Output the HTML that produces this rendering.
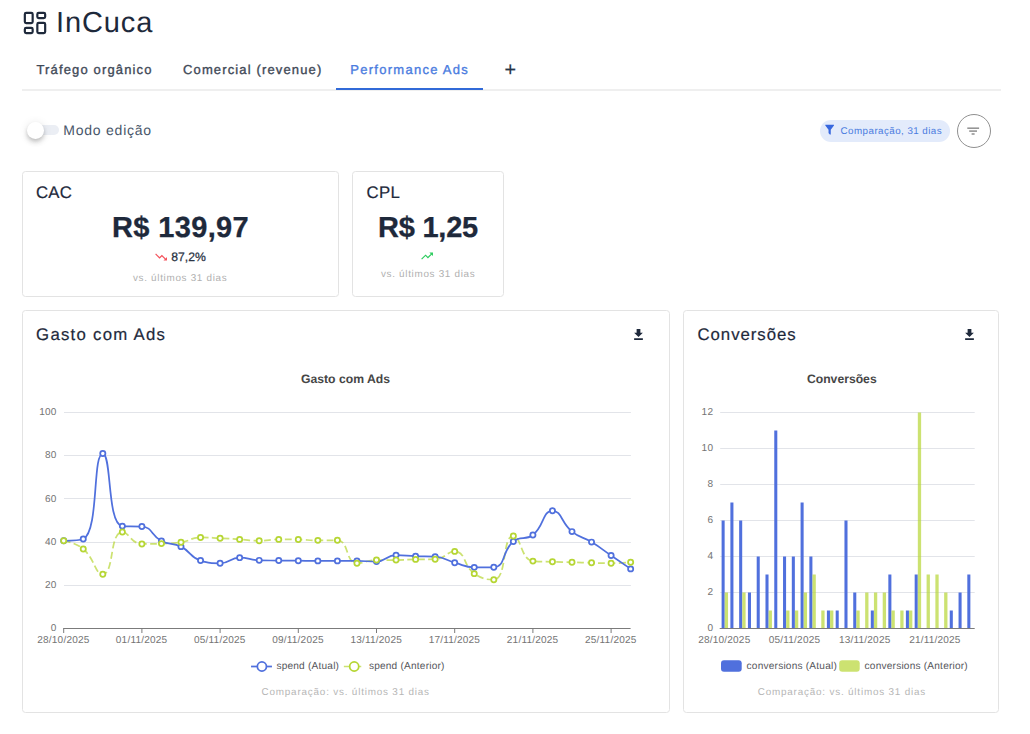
<!DOCTYPE html>
<html lang="pt-BR">
<head>
<meta charset="utf-8">
<title>InCuca</title>
<style>
*{box-sizing:border-box;margin:0;padding:0}
html,body{width:1030px;height:734px;background:#fff;overflow:hidden}
body{position:relative;font-family:"Liberation Sans",Arial,sans-serif;color:#1e293b;text-rendering:geometricPrecision}
.abs{position:absolute;white-space:nowrap}
.card{position:absolute;border:1px solid #e3e3e3;border-radius:3.5px;background:#fff}
.chart{position:absolute;left:0;top:0}
.tab{position:absolute;top:62.3px;font-size:13px;-webkit-text-stroke:.35px currentColor;color:#3f4957;letter-spacing:1.14px;line-height:16px;white-space:nowrap}
.ttl{position:absolute;font-size:16.8px;letter-spacing:.25px;-webkit-text-stroke:.2px currentColor;line-height:20px;color:#1e293b;white-space:nowrap}
.big{position:absolute;font-size:29px;-webkit-text-stroke:.3px currentColor;font-weight:bold;line-height:34px;color:#1e293b;white-space:nowrap;text-align:center}
.sub{position:absolute;font-size:9.9px;line-height:12px;color:#b0b0b0;white-space:nowrap;letter-spacing:.7px}
.foot{position:absolute;font-size:9.9px;line-height:13px;color:#b6b6b6;white-space:nowrap;letter-spacing:.81px}
</style>
</head>
<body>
<!-- header -->
<svg class="abs" style="left:20.1px;top:7.9px" width="30" height="30" viewBox="0 0 24 24" fill="none" stroke="#1e293b" stroke-width="1.75" stroke-linejoin="round">
<rect x="3.87" y="3.87" width="6.26" height="8.26" rx="1.1"/><rect x="3.87" y="15.87" width="6.26" height="4.26" rx="1.1"/><rect x="13.87" y="11.87" width="6.26" height="8.26" rx="1.1"/><rect x="13.87" y="3.87" width="6.26" height="4.26" rx="1.1"/>
</svg>
<div class="abs" id="brand" style="left:56px;top:5.8px;font-size:29px;line-height:34px;color:#1e293b;letter-spacing:.9px">InCuca</div>

<!-- tabs -->
<div class="abs" style="left:22px;top:89px;width:978.6px;height:2px;background:#efefef"></div>
<div class="tab" id="tab1" style="left:36.5px">Tráfego orgânico</div>
<div class="tab" id="tab2" style="left:183px">Comercial (revenue)</div>
<div class="tab" id="tab3" style="left:350.3px;color:#4a7ce0;letter-spacing:1.27px">Performance Ads</div>
<div class="abs" style="left:336px;top:88px;width:147px;height:2px;background:#316ad8"></div>
<div class="abs" id="plus" style="left:504.6px;top:59px;font-size:19.8px;line-height:22px;color:#283548;-webkit-text-stroke:.2px currentColor">+</div>

<!-- toggle -->
<div class="abs" style="left:30px;top:125px;width:28.5px;height:10.2px;border-radius:6px;background:#ebeef4"></div>
<div class="abs" style="left:27px;top:122.2px;width:16.6px;height:16.6px;border-radius:50%;background:#fff;box-shadow:0 2px 4px -1px rgba(0,0,0,.17),0 4px 5px 0 rgba(0,0,0,.11),0 1px 10px 0 rgba(0,0,0,.1)"></div>
<div class="abs" id="modo" style="left:63.2px;top:120.5px;font-size:14px;line-height:18px;color:#475569;letter-spacing:.78px">Modo edição</div>

<!-- chip -->
<div class="abs" style="left:819.7px;top:120px;width:130.5px;height:21.6px;border-radius:11px;background:#e3ebfb"></div>
<svg class="abs" style="left:823.2px;top:122.85px" width="13.3" height="13.3" viewBox="0 0 24 24"><path fill="#3767de" d="M14,12V19.88C14.04,20.18 13.94,20.5 13.71,20.71C13.32,21.1 12.69,21.1 12.3,20.71L10.29,18.7C10.06,18.47 9.96,18.16 10,17.87V12H9.97L4.21,4.62C3.87,4.19 3.95,3.56 4.38,3.22C4.57,3.08 4.78,3 5,3V3H19V3C19.22,3 19.43,3.08 19.62,3.22C20.05,3.56 20.13,4.19 19.79,4.62L14.03,12H14Z"/></svg>
<div class="abs" id="chip" style="left:840.6px;top:125px;font-size:9.8px;line-height:13px;color:#4a7be0;letter-spacing:.44px">Comparação, 31 dias</div>
<!-- filter button -->
<div class="abs" style="left:957px;top:113.6px;width:34px;height:34px;border-radius:50%;border:1.2px solid #909090"></div>
<svg class="abs" style="left:964px;top:120.6px" width="20" height="20" viewBox="0 0 20 20"><g stroke="#959595" stroke-width="1.6"><line x1="3.3" x2="15.1" y1="7.2" y2="7.2"/><line x1="5.2" x2="13" y1="10.1" y2="10.1"/><line x1="7.6" x2="10.6" y1="13" y2="13"/></g></svg>

<!-- KPI cards -->
<div class="card" style="left:22px;top:171px;width:317px;height:125.5px"></div>
<div class="card" style="left:352px;top:171px;width:152px;height:125.5px"></div>
<div class="ttl" id="cac" style="left:36px;top:183px">CAC</div>
<div class="ttl" id="cpl" style="left:366.6px;top:183px">CPL</div>
<div class="big" id="big1" style="left:22px;width:317px;top:211px;letter-spacing:.36px">R$ 139,97</div>
<div class="big" id="big2" style="left:352px;width:152px;top:211px;letter-spacing:-.25px">R$ 1,25</div>
<svg class="abs" style="left:154.2px;top:250.3px" width="14.16" height="14.16" viewBox="0 0 24 24"><path fill="#f4525c" d="M16,18L18.29,15.71L13.41,10.83L9.41,14.83L2,7.41L3.41,6L9.41,12L13.41,8L19.71,14.29L22,12V18H16Z"/></svg>
<div class="abs" id="pct" style="left:171.3px;top:249.6px;font-size:12.2px;line-height:15px;-webkit-text-stroke:.25px currentColor;color:#2b3445;letter-spacing:0px">87,2%</div>
<svg class="abs" style="left:419.5px;top:249.1px" width="14.16" height="14.16" viewBox="0 0 24 24"><path fill="#2ecc5f" d="M16,6L18.29,8.29L13.41,13.17L9.41,9.17L2,16.59L3.41,18L9.41,12L13.41,16L19.71,9.71L22,12V6H16Z"/></svg>
<div class="sub" id="sub1" style="left:132.9px;top:272.6px">vs. últimos 31 dias</div>
<div class="sub" id="sub2" style="left:380.9px;top:269.2px">vs. últimos 31 dias</div>

<!-- chart cards -->
<div class="card" style="left:22px;top:310px;width:648px;height:403px"></div>
<div class="card" style="left:683px;top:310px;width:316px;height:403px"></div>
<div class="ttl" id="t1" style="left:36.1px;top:324.8px;letter-spacing:1.25px">Gasto com Ads</div>
<div class="ttl" id="t2" style="left:697.5px;top:324.8px;letter-spacing:.95px">Conversões</div>
<svg class="abs" style="left:630.6px;top:326.9px" width="15" height="15" viewBox="0 0 24 24"><path fill="#1e293b" d="M5,20.7H19V17.8H5M19,9H15V3H9V9H5L12,16L19,9Z"/></svg>
<svg class="abs" style="left:961.5px;top:326.9px" width="15" height="15" viewBox="0 0 24 24"><path fill="#1e293b" d="M5,20.7H19V17.8H5M19,9H15V3H9V9H5L12,16L19,9Z"/></svg>
<svg class="chart" width="1030" height="734" viewBox="0 0 1030 734" font-family="'Liberation Sans', Arial, sans-serif">
<text x="56.5" y="631.2" font-size="10.05" letter-spacing=".2" fill="#747474" text-anchor="end">0</text>
<line x1="64.0" x2="630.9" y1="585.5" y2="585.5" stroke="#e2e4e9" stroke-width="1"/>
<text x="56.5" y="588.0" font-size="10.05" letter-spacing=".2" fill="#747474" text-anchor="end">20</text>
<line x1="64.0" x2="630.9" y1="542.5" y2="542.5" stroke="#e2e4e9" stroke-width="1"/>
<text x="56.5" y="544.8" font-size="10.05" letter-spacing=".2" fill="#747474" text-anchor="end">40</text>
<line x1="64.0" x2="630.9" y1="498.5" y2="498.5" stroke="#e2e4e9" stroke-width="1"/>
<text x="56.5" y="501.6" font-size="10.05" letter-spacing=".2" fill="#747474" text-anchor="end">60</text>
<line x1="64.0" x2="630.9" y1="455.5" y2="455.5" stroke="#e2e4e9" stroke-width="1"/>
<text x="56.5" y="458.4" font-size="10.05" letter-spacing=".2" fill="#747474" text-anchor="end">80</text>
<line x1="64.0" x2="630.9" y1="412.5" y2="412.5" stroke="#e2e4e9" stroke-width="1"/>
<text x="56.5" y="415.2" font-size="10.05" letter-spacing=".2" fill="#747474" text-anchor="end">100</text>
<line x1="63.2" x2="630.6" y1="628.5" y2="628.5" stroke="#7b7b7b" stroke-width="1"/>
<line x1="63.7" x2="63.7" y1="628.5" y2="633.0" stroke="#7b7b7b" stroke-width="1"/>
<text x="63.4" y="643.2" font-size="10.05" letter-spacing=".2" fill="#747474" text-anchor="middle">28/10/2025</text>
<line x1="141.9" x2="141.9" y1="628.5" y2="633.0" stroke="#7b7b7b" stroke-width="1"/>
<text x="141.6" y="643.2" font-size="10.05" letter-spacing=".2" fill="#747474" text-anchor="middle">01/11/2025</text>
<line x1="220.1" x2="220.1" y1="628.5" y2="633.0" stroke="#7b7b7b" stroke-width="1"/>
<text x="219.8" y="643.2" font-size="10.05" letter-spacing=".2" fill="#747474" text-anchor="middle">05/11/2025</text>
<line x1="298.3" x2="298.3" y1="628.5" y2="633.0" stroke="#7b7b7b" stroke-width="1"/>
<text x="298.0" y="643.2" font-size="10.05" letter-spacing=".2" fill="#747474" text-anchor="middle">09/11/2025</text>
<line x1="376.5" x2="376.5" y1="628.5" y2="633.0" stroke="#7b7b7b" stroke-width="1"/>
<text x="376.2" y="643.2" font-size="10.05" letter-spacing=".2" fill="#747474" text-anchor="middle">13/11/2025</text>
<line x1="454.7" x2="454.7" y1="628.5" y2="633.0" stroke="#7b7b7b" stroke-width="1"/>
<text x="454.4" y="643.2" font-size="10.05" letter-spacing=".2" fill="#747474" text-anchor="middle">17/11/2025</text>
<line x1="532.9" x2="532.9" y1="628.5" y2="633.0" stroke="#7b7b7b" stroke-width="1"/>
<text x="532.6" y="643.2" font-size="10.05" letter-spacing=".2" fill="#747474" text-anchor="middle">21/11/2025</text>
<line x1="611.1" x2="611.1" y1="628.5" y2="633.0" stroke="#7b7b7b" stroke-width="1"/>
<text x="610.8" y="643.2" font-size="10.05" letter-spacing=".2" fill="#747474" text-anchor="middle">25/11/2025</text>
<text x="345.5" y="383.3" font-size="12.2" font-weight="bold" fill="#464646" text-anchor="middle">Gasto com Ads</text>
<path d="M63.70 540.80C63.70 540.80 75.45 542.33 83.25 549.01C95.00 559.07 94.85 574.28 102.80 574.28C114.40 574.28 109.24 531.95 122.35 531.95C128.79 531.95 131.35 543.94 141.90 543.94C150.90 543.94 151.69 543.94 161.45 543.61C171.24 543.29 171.36 543.61 181.00 542.32C190.91 540.98 190.63 537.43 200.55 537.43C210.18 537.43 210.33 537.73 220.10 538.21C229.88 538.70 229.88 538.75 239.65 539.38C249.43 540.01 249.42 540.74 259.20 540.74C268.97 540.74 268.96 539.38 278.75 539.38C288.51 539.38 288.53 539.38 298.30 539.57C308.08 539.77 308.07 540.37 317.85 540.37C327.62 540.37 329.72 540.26 337.40 540.26C349.27 540.26 345.15 563.27 356.95 563.27C364.70 563.27 366.66 560.03 376.50 560.03C386.21 560.03 386.28 560.03 396.05 560.03C405.83 560.03 405.82 559.60 415.60 559.38C425.37 559.16 425.73 559.38 435.15 559.16C445.28 558.93 446.58 551.39 454.70 551.39C466.13 551.39 462.69 565.27 474.25 573.64C482.24 579.42 487.95 579.68 493.80 579.68C507.50 579.68 501.61 535.94 513.35 535.94C521.16 535.94 520.79 560.05 532.90 561.11C540.34 561.76 542.67 561.46 552.45 561.76C562.22 562.05 562.22 562.03 572.00 562.30C581.77 562.57 581.77 562.59 591.55 562.84C601.32 563.08 601.33 563.27 611.10 563.27C620.88 563.27 630.65 562.30 630.65 562.30" fill="none" stroke="#b6d634" stroke-width="1.74" stroke-dasharray="6.96 3.48" stroke-opacity="0.7" stroke-linejoin="round"/>
<path d="M63.70 540.80C63.70 540.80 79.68 540.80 83.25 539.08C99.23 531.35 92.27 453.54 102.80 453.54C111.82 453.54 106.84 524.46 122.35 526.12C126.39 526.55 133.19 526.12 141.90 526.55C152.74 527.09 150.80 535.55 161.45 541.02C170.35 545.59 172.03 542.16 181.00 546.64C191.58 551.92 189.82 557.24 200.55 560.55C209.37 563.27 210.47 563.27 220.10 563.27C230.02 563.27 229.73 557.65 239.65 557.65C249.28 557.65 249.38 560.16 259.20 560.35C268.93 560.55 268.97 560.45 278.75 560.55C288.52 560.64 288.52 560.65 298.30 560.74C308.07 560.83 308.07 560.89 317.85 560.89C327.62 560.89 327.63 560.89 337.40 560.89C347.18 560.89 347.18 560.89 356.95 560.94C366.73 560.98 366.97 561.54 376.50 561.54C386.52 561.54 386.03 555.12 396.05 555.12C405.58 555.12 405.82 555.75 415.60 556.14C425.37 556.53 425.59 556.14 435.15 556.68C445.14 557.24 444.84 559.99 454.70 562.68C464.39 565.33 464.34 567.37 474.25 567.37C483.89 567.37 486.44 567.37 493.80 567.26C505.99 567.09 501.40 551.32 513.35 541.45C520.95 535.17 525.11 541.08 532.90 534.97C544.66 525.75 542.26 510.78 552.45 510.78C561.81 510.78 561.00 522.79 572.00 531.60C580.55 538.45 582.10 536.32 591.55 542.10C601.65 548.27 601.33 548.80 611.10 555.49C620.88 562.19 630.65 568.88 630.65 568.88" fill="none" stroke="#5070dd" stroke-width="1.74" stroke-linejoin="round"/>
<circle cx="63.70" cy="540.80" r="2.6" fill="#fff" stroke="#5070dd" stroke-width="1.74"/>
<circle cx="83.25" cy="539.08" r="2.6" fill="#fff" stroke="#5070dd" stroke-width="1.74"/>
<circle cx="102.80" cy="453.54" r="2.6" fill="#fff" stroke="#5070dd" stroke-width="1.74"/>
<circle cx="122.35" cy="526.12" r="2.6" fill="#fff" stroke="#5070dd" stroke-width="1.74"/>
<circle cx="141.90" cy="526.55" r="2.6" fill="#fff" stroke="#5070dd" stroke-width="1.74"/>
<circle cx="161.45" cy="541.02" r="2.6" fill="#fff" stroke="#5070dd" stroke-width="1.74"/>
<circle cx="181.00" cy="546.64" r="2.6" fill="#fff" stroke="#5070dd" stroke-width="1.74"/>
<circle cx="200.55" cy="560.55" r="2.6" fill="#fff" stroke="#5070dd" stroke-width="1.74"/>
<circle cx="220.10" cy="563.27" r="2.6" fill="#fff" stroke="#5070dd" stroke-width="1.74"/>
<circle cx="239.65" cy="557.65" r="2.6" fill="#fff" stroke="#5070dd" stroke-width="1.74"/>
<circle cx="259.20" cy="560.35" r="2.6" fill="#fff" stroke="#5070dd" stroke-width="1.74"/>
<circle cx="278.75" cy="560.55" r="2.6" fill="#fff" stroke="#5070dd" stroke-width="1.74"/>
<circle cx="298.30" cy="560.74" r="2.6" fill="#fff" stroke="#5070dd" stroke-width="1.74"/>
<circle cx="317.85" cy="560.89" r="2.6" fill="#fff" stroke="#5070dd" stroke-width="1.74"/>
<circle cx="337.40" cy="560.89" r="2.6" fill="#fff" stroke="#5070dd" stroke-width="1.74"/>
<circle cx="356.95" cy="560.94" r="2.6" fill="#fff" stroke="#5070dd" stroke-width="1.74"/>
<circle cx="376.50" cy="561.54" r="2.6" fill="#fff" stroke="#5070dd" stroke-width="1.74"/>
<circle cx="396.05" cy="555.12" r="2.6" fill="#fff" stroke="#5070dd" stroke-width="1.74"/>
<circle cx="415.60" cy="556.14" r="2.6" fill="#fff" stroke="#5070dd" stroke-width="1.74"/>
<circle cx="435.15" cy="556.68" r="2.6" fill="#fff" stroke="#5070dd" stroke-width="1.74"/>
<circle cx="454.70" cy="562.68" r="2.6" fill="#fff" stroke="#5070dd" stroke-width="1.74"/>
<circle cx="474.25" cy="567.37" r="2.6" fill="#fff" stroke="#5070dd" stroke-width="1.74"/>
<circle cx="493.80" cy="567.26" r="2.6" fill="#fff" stroke="#5070dd" stroke-width="1.74"/>
<circle cx="513.35" cy="541.45" r="2.6" fill="#fff" stroke="#5070dd" stroke-width="1.74"/>
<circle cx="532.90" cy="534.97" r="2.6" fill="#fff" stroke="#5070dd" stroke-width="1.74"/>
<circle cx="552.45" cy="510.78" r="2.6" fill="#fff" stroke="#5070dd" stroke-width="1.74"/>
<circle cx="572.00" cy="531.60" r="2.6" fill="#fff" stroke="#5070dd" stroke-width="1.74"/>
<circle cx="591.55" cy="542.10" r="2.6" fill="#fff" stroke="#5070dd" stroke-width="1.74"/>
<circle cx="611.10" cy="555.49" r="2.6" fill="#fff" stroke="#5070dd" stroke-width="1.74"/>
<circle cx="630.65" cy="568.88" r="2.6" fill="#fff" stroke="#5070dd" stroke-width="1.74"/>
<circle cx="63.70" cy="540.80" r="2.6" fill="#fff" stroke="#b6d634" stroke-width="1.74"/>
<circle cx="83.25" cy="549.01" r="2.6" fill="#fff" stroke="#b6d634" stroke-width="1.74"/>
<circle cx="102.80" cy="574.28" r="2.6" fill="#fff" stroke="#b6d634" stroke-width="1.74"/>
<circle cx="122.35" cy="531.95" r="2.6" fill="#fff" stroke="#b6d634" stroke-width="1.74"/>
<circle cx="141.90" cy="543.94" r="2.6" fill="#fff" stroke="#b6d634" stroke-width="1.74"/>
<circle cx="161.45" cy="543.61" r="2.6" fill="#fff" stroke="#b6d634" stroke-width="1.74"/>
<circle cx="181.00" cy="542.32" r="2.6" fill="#fff" stroke="#b6d634" stroke-width="1.74"/>
<circle cx="200.55" cy="537.43" r="2.6" fill="#fff" stroke="#b6d634" stroke-width="1.74"/>
<circle cx="220.10" cy="538.21" r="2.6" fill="#fff" stroke="#b6d634" stroke-width="1.74"/>
<circle cx="239.65" cy="539.38" r="2.6" fill="#fff" stroke="#b6d634" stroke-width="1.74"/>
<circle cx="259.20" cy="540.74" r="2.6" fill="#fff" stroke="#b6d634" stroke-width="1.74"/>
<circle cx="278.75" cy="539.38" r="2.6" fill="#fff" stroke="#b6d634" stroke-width="1.74"/>
<circle cx="298.30" cy="539.57" r="2.6" fill="#fff" stroke="#b6d634" stroke-width="1.74"/>
<circle cx="317.85" cy="540.37" r="2.6" fill="#fff" stroke="#b6d634" stroke-width="1.74"/>
<circle cx="337.40" cy="540.26" r="2.6" fill="#fff" stroke="#b6d634" stroke-width="1.74"/>
<circle cx="356.95" cy="563.27" r="2.6" fill="#fff" stroke="#b6d634" stroke-width="1.74"/>
<circle cx="376.50" cy="560.03" r="2.6" fill="#fff" stroke="#b6d634" stroke-width="1.74"/>
<circle cx="396.05" cy="560.03" r="2.6" fill="#fff" stroke="#b6d634" stroke-width="1.74"/>
<circle cx="415.60" cy="559.38" r="2.6" fill="#fff" stroke="#b6d634" stroke-width="1.74"/>
<circle cx="435.15" cy="559.16" r="2.6" fill="#fff" stroke="#b6d634" stroke-width="1.74"/>
<circle cx="454.70" cy="551.39" r="2.6" fill="#fff" stroke="#b6d634" stroke-width="1.74"/>
<circle cx="474.25" cy="573.64" r="2.6" fill="#fff" stroke="#b6d634" stroke-width="1.74"/>
<circle cx="493.80" cy="579.68" r="2.6" fill="#fff" stroke="#b6d634" stroke-width="1.74"/>
<circle cx="513.35" cy="535.94" r="2.6" fill="#fff" stroke="#b6d634" stroke-width="1.74"/>
<circle cx="532.90" cy="561.11" r="2.6" fill="#fff" stroke="#b6d634" stroke-width="1.74"/>
<circle cx="552.45" cy="561.76" r="2.6" fill="#fff" stroke="#b6d634" stroke-width="1.74"/>
<circle cx="572.00" cy="562.30" r="2.6" fill="#fff" stroke="#b6d634" stroke-width="1.74"/>
<circle cx="591.55" cy="562.84" r="2.6" fill="#fff" stroke="#b6d634" stroke-width="1.74"/>
<circle cx="611.10" cy="563.27" r="2.6" fill="#fff" stroke="#b6d634" stroke-width="1.74"/>
<circle cx="630.65" cy="562.30" r="2.6" fill="#fff" stroke="#b6d634" stroke-width="1.74"/>
<line x1="251.05" x2="271.95" y1="666.5" y2="666.5" stroke="#5070dd" stroke-width="1.74"/>
<circle cx="261.9" cy="666.5" r="4.55" fill="#fff" stroke="#5070dd" stroke-width="1.74"/>
<text x="276.4" y="668.5" font-size="10.1" letter-spacing=".21" fill="#55565b">spend (Atual)</text>
<line x1="343.85" x2="364.75" y1="666.5" y2="666.5" stroke="#b6d634" stroke-width="1.74" stroke-dasharray="6.96 3.48" stroke-opacity="0.7"/>
<circle cx="354.2" cy="666.5" r="4.55" fill="#fff" stroke="#b6d634" stroke-width="1.74"/>
<text x="368.9" y="668.5" font-size="10.1" letter-spacing=".21" fill="#55565b">spend (Anterior)</text>
<text x="713.2" y="631.2" font-size="10.05" letter-spacing=".2" fill="#747474" text-anchor="end">0</text>
<line x1="720.2" x2="974.7" y1="592.5" y2="592.5" stroke="#e2e4e9" stroke-width="1"/>
<text x="713.2" y="595.2" font-size="10.05" letter-spacing=".2" fill="#747474" text-anchor="end">2</text>
<line x1="720.2" x2="974.7" y1="556.5" y2="556.5" stroke="#e2e4e9" stroke-width="1"/>
<text x="713.2" y="559.2" font-size="10.05" letter-spacing=".2" fill="#747474" text-anchor="end">4</text>
<line x1="720.2" x2="974.7" y1="520.5" y2="520.5" stroke="#e2e4e9" stroke-width="1"/>
<text x="713.2" y="523.2" font-size="10.05" letter-spacing=".2" fill="#747474" text-anchor="end">6</text>
<line x1="720.2" x2="974.7" y1="484.5" y2="484.5" stroke="#e2e4e9" stroke-width="1"/>
<text x="713.2" y="487.2" font-size="10.05" letter-spacing=".2" fill="#747474" text-anchor="end">8</text>
<line x1="720.2" x2="974.7" y1="448.5" y2="448.5" stroke="#e2e4e9" stroke-width="1"/>
<text x="713.2" y="451.2" font-size="10.05" letter-spacing=".2" fill="#747474" text-anchor="end">10</text>
<line x1="720.2" x2="974.7" y1="412.5" y2="412.5" stroke="#e2e4e9" stroke-width="1"/>
<text x="713.2" y="415.2" font-size="10.05" letter-spacing=".2" fill="#747474" text-anchor="end">12</text>
<rect x="721.60" y="520.50" width="3.05" height="108.00" fill="#5070dd"/>
<rect x="724.75" y="592.50" width="3.3" height="36.00" fill="#b6d634" fill-opacity="0.7"/>
<rect x="730.38" y="502.50" width="3.05" height="126.00" fill="#5070dd"/>
<rect x="739.15" y="520.50" width="3.05" height="108.00" fill="#5070dd"/>
<rect x="742.30" y="592.50" width="3.3" height="36.00" fill="#b6d634" fill-opacity="0.7"/>
<rect x="747.93" y="592.50" width="3.05" height="36.00" fill="#5070dd"/>
<rect x="756.70" y="556.50" width="3.05" height="72.00" fill="#5070dd"/>
<rect x="765.48" y="574.50" width="3.05" height="54.00" fill="#5070dd"/>
<rect x="768.63" y="610.50" width="3.3" height="18.00" fill="#b6d634" fill-opacity="0.7"/>
<rect x="774.26" y="430.50" width="3.05" height="198.00" fill="#5070dd"/>
<rect x="783.03" y="556.50" width="3.05" height="72.00" fill="#5070dd"/>
<rect x="786.18" y="610.50" width="3.3" height="18.00" fill="#b6d634" fill-opacity="0.7"/>
<rect x="791.81" y="556.50" width="3.05" height="72.00" fill="#5070dd"/>
<rect x="794.96" y="610.50" width="3.3" height="18.00" fill="#b6d634" fill-opacity="0.7"/>
<rect x="800.58" y="502.50" width="3.05" height="126.00" fill="#5070dd"/>
<rect x="803.73" y="592.50" width="3.3" height="36.00" fill="#b6d634" fill-opacity="0.7"/>
<rect x="809.36" y="556.50" width="3.05" height="72.00" fill="#5070dd"/>
<rect x="812.51" y="574.50" width="3.3" height="54.00" fill="#b6d634" fill-opacity="0.7"/>
<rect x="821.28" y="610.50" width="3.3" height="18.00" fill="#b6d634" fill-opacity="0.7"/>
<rect x="826.91" y="610.50" width="3.05" height="18.00" fill="#5070dd"/>
<rect x="830.06" y="610.50" width="3.3" height="18.00" fill="#b6d634" fill-opacity="0.7"/>
<rect x="835.69" y="610.50" width="3.05" height="18.00" fill="#5070dd"/>
<rect x="844.46" y="520.50" width="3.05" height="108.00" fill="#5070dd"/>
<rect x="853.24" y="592.50" width="3.05" height="36.00" fill="#5070dd"/>
<rect x="856.39" y="610.50" width="3.3" height="18.00" fill="#b6d634" fill-opacity="0.7"/>
<rect x="865.16" y="592.50" width="3.3" height="36.00" fill="#b6d634" fill-opacity="0.7"/>
<rect x="870.79" y="610.50" width="3.05" height="18.00" fill="#5070dd"/>
<rect x="873.94" y="592.50" width="3.3" height="36.00" fill="#b6d634" fill-opacity="0.7"/>
<rect x="882.72" y="592.50" width="3.3" height="36.00" fill="#b6d634" fill-opacity="0.7"/>
<rect x="888.34" y="574.50" width="3.05" height="54.00" fill="#5070dd"/>
<rect x="891.49" y="610.50" width="3.3" height="18.00" fill="#b6d634" fill-opacity="0.7"/>
<rect x="900.27" y="610.50" width="3.3" height="18.00" fill="#b6d634" fill-opacity="0.7"/>
<rect x="905.89" y="610.50" width="3.05" height="18.00" fill="#5070dd"/>
<rect x="909.04" y="610.50" width="3.3" height="18.00" fill="#b6d634" fill-opacity="0.7"/>
<rect x="914.67" y="574.50" width="3.05" height="54.00" fill="#5070dd"/>
<rect x="917.82" y="412.50" width="3.3" height="216.00" fill="#b6d634" fill-opacity="0.7"/>
<rect x="926.59" y="574.50" width="3.3" height="54.00" fill="#b6d634" fill-opacity="0.7"/>
<rect x="935.37" y="574.50" width="3.3" height="54.00" fill="#b6d634" fill-opacity="0.7"/>
<rect x="944.15" y="592.50" width="3.3" height="36.00" fill="#b6d634" fill-opacity="0.7"/>
<rect x="949.77" y="610.50" width="3.05" height="18.00" fill="#5070dd"/>
<rect x="958.55" y="592.50" width="3.05" height="36.00" fill="#5070dd"/>
<rect x="967.32" y="574.50" width="3.05" height="54.00" fill="#5070dd"/>
<line x1="719.7" x2="974.7" y1="628.5" y2="628.5" stroke="#7b7b7b" stroke-width="1"/>
<text x="724.3" y="643.2" font-size="10.05" letter-spacing=".2" fill="#747474" text-anchor="middle">28/10/2025</text>
<text x="794.5" y="643.2" font-size="10.05" letter-spacing=".2" fill="#747474" text-anchor="middle">05/11/2025</text>
<text x="864.7" y="643.2" font-size="10.05" letter-spacing=".2" fill="#747474" text-anchor="middle">13/11/2025</text>
<text x="934.9" y="643.2" font-size="10.05" letter-spacing=".2" fill="#747474" text-anchor="middle">21/11/2025</text>
<text x="841.8" y="383.3" font-size="12.2" font-weight="bold" fill="#464646" text-anchor="middle">Conversões</text>
<rect x="721" y="660.2" width="20.7" height="11.6" rx="3" fill="#5070dd"/>
<text x="746.6" y="668.5" font-size="10.1" letter-spacing=".21" fill="#55565b">conversions (Atual)</text>
<rect x="839.2" y="660.2" width="20.5" height="11.6" rx="3" fill="#b6d634" fill-opacity="0.7"/>
<text x="864.6" y="668.5" font-size="10.1" letter-spacing=".21" fill="#55565b">conversions (Anterior)</text>
</svg>
<div class="foot" id="f1" style="left:261.5px;top:685.5px">Comparação: vs. últimos 31 dias</div>
<div class="foot" id="f2" style="left:757.7px;top:685.5px">Comparação: vs. últimos 31 dias</div>
</body>
</html>
